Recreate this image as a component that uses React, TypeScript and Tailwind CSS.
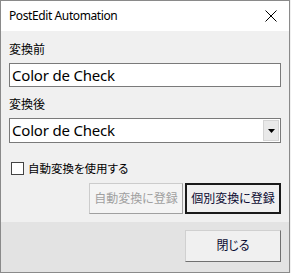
import { useState } from "react";

const jp = "font-['Noto_Sans','Noto_Sans_CJK_JP',sans-serif] [font-feature-settings:'palt']";

export default function App() {
  const [auto, setAuto] = useState(false);

  return (
    <div className={`w-[291px] h-[273px] bg-[#f0f0f0] text-black ${jp}`}>
      <div className="w-[290px] h-[273px] flex flex-col border border-[#8a8a8a] bg-[#f0f0f0]">
        {/* title bar */}
        <div className="h-[30px] shrink-0 bg-white flex items-center justify-between pl-[8px] pr-[7px]">
          <span className="text-[12px] leading-none tracking-[-0.4px]">PostEdit Automation</span>
          <svg width="12" height="12" viewBox="0 0 12 12" className="mr-[5px]">
            <path d="M0.5 0.5 L11.5 11.5 M11.5 0.5 L0.5 11.5" stroke="#000" strokeWidth="1" />
          </svg>
        </div>

        {/* body */}
        <div className="flex flex-col px-[8px] pb-[8px]">
          <div className="mt-[11px] h-[16px] text-[12px] leading-[16px]">変換前</div>
          <input
            defaultValue="Color de Check"
            className="mt-[5px] h-[24px] w-[272px] border border-[#7a7a7a] bg-white px-[2px] text-[15px] tracking-[-0.2px] outline-none"
          />

          <div className="mt-[10px] h-[16px] text-[12px] leading-[16px]">変換後</div>
          <div className="mt-[5px] h-[25px] w-[272px] flex items-center border border-[#7a7a7a] bg-white">
            <span className="flex-1 pl-[2px] text-[15px] leading-none tracking-[-0.2px]">Color de Check</span>
            <div className="mr-[1px] h-[21px] w-[16px] flex items-center justify-center bg-[#e9e9e9] border border-[#d4d4d4]">
              <svg width="7" height="4" viewBox="0 0 7 4">
                <path d="M0 0 H7 L3.5 4 Z" fill="#000" />
              </svg>
            </div>
          </div>

          <label className="mt-[19px] h-[13px] flex items-center gap-[4px] text-[11.5px]">
            <input
              type="checkbox"
              checked={auto}
              onChange={(e) => setAuto(e.target.checked)}
              className="appearance-none ml-[2px] w-[13px] h-[13px] border border-[#444] bg-white"
            />
            自動変換を使用する
          </label>

          <div className="mt-[8px] flex justify-end gap-[2px]">
            <button
              disabled
              className="h-[31px] w-[94px] border border-[#cccccc] border-b-[#a0a0a0] border-r-[#a0a0a0] bg-[#f4f4f4] text-[12px] text-[#a0a0a0]"
            >
              自動変換に登録
            </button>
            <button className="h-[31px] w-[96px] border-2 border-[#1a1a1a] bg-[#f0f0f0] text-[12px] text-[#0a0a30]">
              個別変換に登録
            </button>
          </div>
        </div>

        {/* footer */}
        <div className="flex-1 bg-[#e3e3e3] flex justify-end items-start pt-[8px] px-[8px]">
          <button className="h-[32px] w-[96px] border border-[#d0d0d0] border-b-[#707070] border-r-[#707070] bg-[#f0f0f0] text-[12px] text-[#0a0a30]">
            閉じる
          </button>
        </div>
      </div>
    </div>
  );
}
